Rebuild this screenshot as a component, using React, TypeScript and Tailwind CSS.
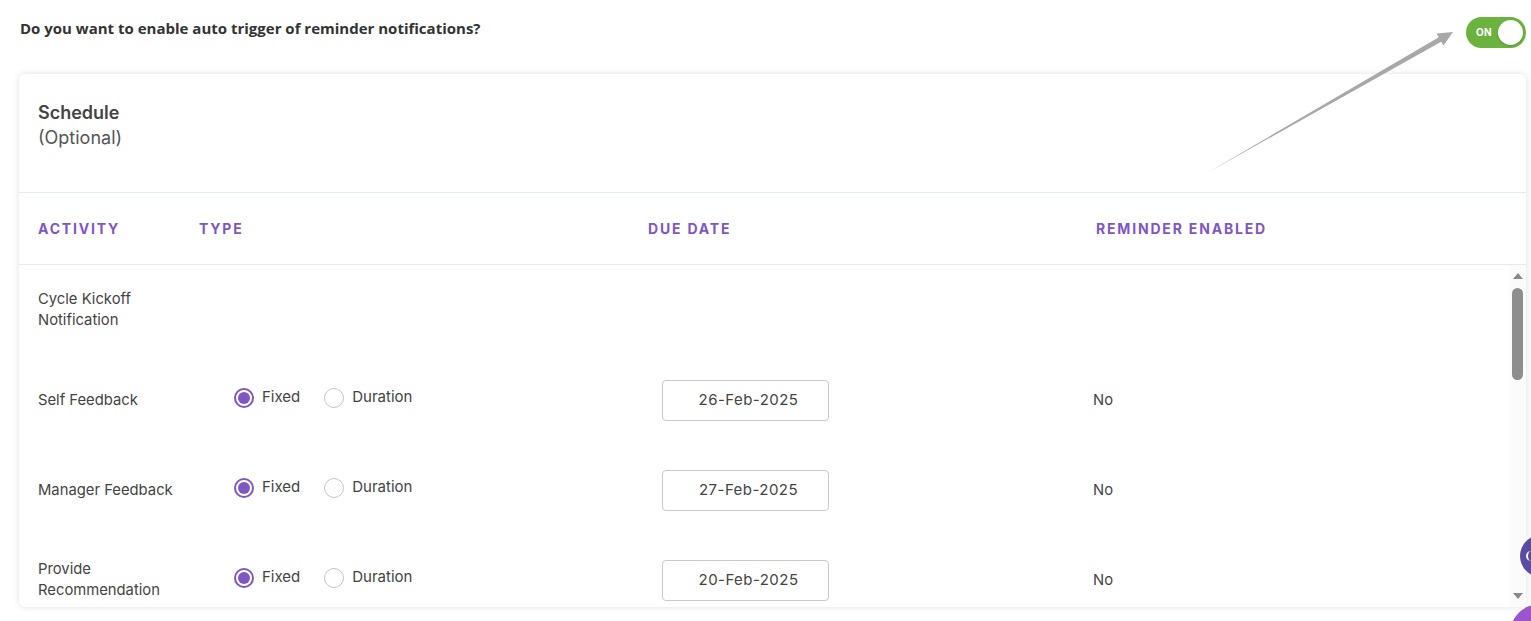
import React from "react";

type Row = {
  name: string;
  type?: "fixed" | "duration";
  date?: string;
  reminder?: string;
};

const rows: Row[] = [
  { name: "Cycle Kickoff Notification" },
  { name: "Self Feedback", type: "fixed", date: "26-Feb-2025", reminder: "No" },
  { name: "Manager Feedback", type: "fixed", date: "27-Feb-2025", reminder: "No" },
  { name: "Provide Recommendation", type: "fixed", date: "20-Feb-2025", reminder: "No" },
];

function Radio({ checked, label }: { checked: boolean; label: string }) {
  return (
    <label className="flex items-center gap-[8px] cursor-pointer">
      {checked ? (
        <span className="w-[20px] h-[20px] rounded-full border-2 border-[#7e57c2] flex items-center justify-center">
          <span className="w-[12px] h-[12px] rounded-full bg-[#7e57c2]" />
        </span>
      ) : (
        <span className="w-[20px] h-[20px] rounded-full border border-[#c4c4c4] bg-white" />
      )}
      <span className="text-[15px] text-[#444]">{label}</span>
    </label>
  );
}

function Scrollbar() {
  return (
    <div className="w-[17px] shrink-0 bg-[#fbfbfb] flex flex-col items-center pt-[8px]">
      <svg width="10" height="6" viewBox="0 0 10 6">
        <path d="M0 6 L5 0 L10 6 Z" fill="#8a8a8a" />
      </svg>
      <div className="w-[11px] h-[92px] mt-[9px] rounded-full bg-[#8e8e8e]" />
      <div className="flex-1" />
      <svg width="10" height="6" viewBox="0 0 10 6" className="mb-[8px]">
        <path d="M0 0 L10 0 L5 6 Z" fill="#8a8a8a" />
      </svg>
    </div>
  );
}

export default function App() {
  return (
    <div
      className="relative w-[1531px] h-[621px] overflow-hidden bg-white pl-[19px] pr-[5px] pt-[17px]"
      style={{ fontFamily: "Inter, 'Noto Sans', sans-serif" }}
    >
      <div className="flex items-start justify-between h-[31px]">
        <p
          className="pl-[1px] mt-[1px] leading-[20px] text-[15px] font-bold text-[#333]"
          style={{ fontFamily: "'Open Sans', Inter, sans-serif" }}
        >
          Do you want to enable auto trigger of reminder notifications?
        </p>
        <button className="relative w-[60px] h-[31px] rounded-full bg-[#6bb33e] flex items-center pl-[10px]">
          <span className="text-[10px] font-bold text-white tracking-wide">ON</span>
          <span className="absolute right-[3px] top-[3px] w-[25px] h-[25px] rounded-full bg-white shadow-[0_1px_2px_rgba(0,0,0,0.2)]" />
        </button>
      </div>

      <div className="mt-[26px] h-[533px] rounded-md bg-white shadow-[0_0_6px_rgba(0,0,0,0.13)] flex flex-col overflow-hidden">
        <div className="h-[119px] shrink-0 px-[19px] pt-[27px] border-b border-[#e6e9ef]">
          <h2 className="text-[18px] font-semibold text-[#444] leading-[24px]">Schedule</h2>
          <p className="text-[18px] text-[#555] leading-[26px]">(Optional)</p>
        </div>

        <div className="h-[72px] shrink-0 px-[19px] grid grid-cols-[161px_449px_448px_1fr] items-center border-b border-[#e6e9ef] text-[14px] font-bold tracking-[0.13em] text-[#7e57c2]">
          <span>ACTIVITY</span>
          <span>TYPE</span>
          <span>DUE DATE</span>
          <span>REMINDER ENABLED</span>
        </div>

        <div className="flex flex-1 min-h-0">
          <div className="flex-1 overflow-hidden">
            {rows.map((r) => (
              <div
                key={r.name}
                className="h-[90px] px-[19px] grid grid-cols-[161px_449px_445px_1fr] items-center text-[14.8px] text-[#444]"
              >
                <span className="pr-[16px] leading-[21px]">{r.name}</span>
                <div className="pl-[35px] flex items-center gap-[24px] -mt-[5px]">
                  {r.type && (
                    <>
                      <Radio checked={r.type === "fixed"} label="Fixed" />
                      <Radio checked={r.type === "duration"} label="Duration" />
                    </>
                  )}
                </div>
                <div className="pl-[14px]">
                  {r.date && (
                    <div className="w-[167px] h-[41px] rounded-[4px] border border-[#c9c9c9] flex items-center justify-center pl-[6px] text-[15px] tracking-[0.03em] text-[#444]">
                      {r.date}
                    </div>
                  )}
                </div>
                <span>{r.reminder}</span>
              </div>
            ))}
          </div>
          <Scrollbar />
        </div>
      </div>

      {/* annotation arrow */}
      <svg
        className="absolute inset-0 pointer-events-none"
        width="1531"
        height="621"
        viewBox="0 0 1531 621"
      >
        <polygon
          points="1207,173 1438.8,37.3 1436.5,33.4 1453,32 1443.5,45.6 1441.2,41.7"
          fill="#a8a8a8"
        />
      </svg>

      {/* floating buttons cut off at right edge */}
      <div className="absolute left-[1520px] top-[535px] w-[42px] h-[42px] rounded-full bg-[#5b4aa2] flex items-center pl-[6px]">
        <span className="w-[6px] h-[10px] border-l-2 border-white rounded-l-full" />
      </div>
      <div className="absolute left-[1510px] top-[604px] w-[60px] h-[60px] rounded-full bg-[#9a55cf]" />
    </div>
  );
}
